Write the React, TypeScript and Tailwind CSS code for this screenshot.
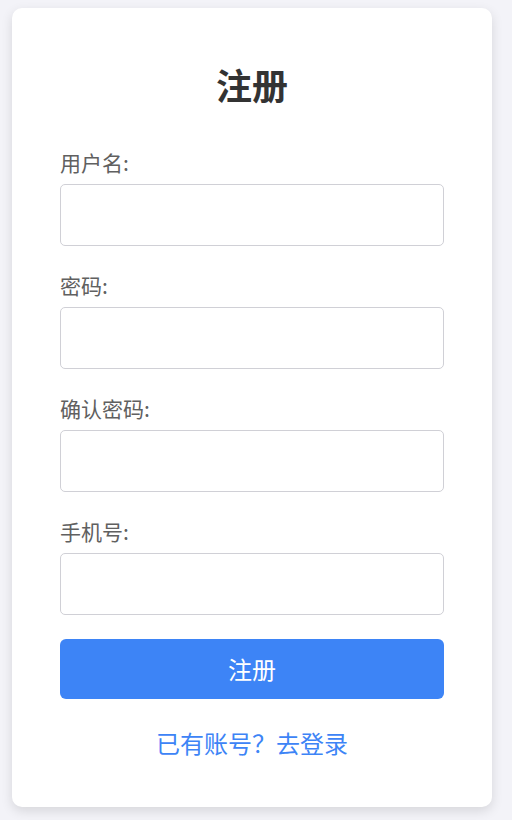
import React from "react";

const fields = [
  { id: "username", label: "用户名:", type: "text" },
  { id: "password", label: "密码:", type: "password" },
  { id: "confirm", label: "确认密码:", type: "password" },
  { id: "phone", label: "手机号:", type: "tel" },
];

const font = { fontFamily: '"Noto Sans CJK SC", "Noto Sans", sans-serif' };

export default function App() {
  return (
    <div className="min-h-[820px] bg-[#f3f3f8] pt-2 pb-[13px]" style={font}>
      <div className="mx-3 w-[480px] rounded-[10px] bg-white px-12 pt-[53px] pb-12 shadow-[0_4px_12px_rgba(0,0,0,0.12)]">
        <h1 className="text-center text-[36px] leading-[46px] font-bold text-[#333]">注册</h1>

        <form className="mt-[40px] flex flex-col gap-6" onSubmit={(e) => e.preventDefault()}>
          {fields.map(({ id, label, type }) => (
            <div key={id} className="flex flex-col gap-[7px]">
              <label htmlFor={id} className="text-[21px] leading-[30px] text-[#606060]">
                {label}
              </label>
              <input
                id={id}
                type={type}
                className="h-[62px] w-full rounded-[5px] border border-[#d0d0d6] px-3 text-[18px] outline-none"
              />
            </div>
          ))}

          <button
            type="submit"
            className="h-[60px] w-full rounded-[6px] bg-[#3d84f6] text-[24px] text-white"
          >
            注册
          </button>
        </form>

        <p className="mt-7 text-center text-[24px] leading-[32px]">
          <a href="#" className="text-[#3d84f6]">
            已有账号？去登录
          </a>
        </p>
      </div>
    </div>
  );
}
